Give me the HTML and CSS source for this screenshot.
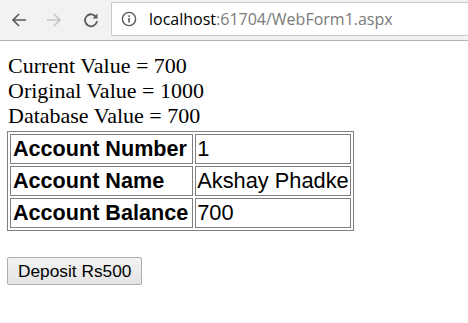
FILE: index.html
```html
<!DOCTYPE html>
<html lang="en">
<head>
  <meta charset="UTF-8" />
  <title>WebForm1</title>
  <link rel="stylesheet" href="styles.css">
</head>
<body>
  <div class="toolbar">
    <span class="nav-btn back">
      <svg width="18" height="18" viewBox="0 0 18 18"><path d="M16 9H3M9 3L3 9l6 6" fill="none" stroke="#5a5a5a" stroke-width="1.6"/></svg>
    </span>
    <span class="nav-btn forward">
      <svg width="18" height="18" viewBox="0 0 18 18"><path d="M2 9h13M9 3l6 6-6 6" fill="none" stroke="#c4c4c4" stroke-width="1.6"/></svg>
    </span>
    <span class="nav-btn reload">
      <svg width="18" height="18" viewBox="0 0 18 18"><path d="M14.2 6.2A6 6 0 1 0 15 10" fill="none" stroke="#5a5a5a" stroke-width="1.8"/><path d="M15.5 2.5v5h-5z" fill="#5a5a5a"/></svg>
    </span>
    <div class="address">
      <svg class="info" width="16" height="16" viewBox="0 0 16 16"><circle cx="8" cy="8" r="6.6" fill="none" stroke="#5a5a5a" stroke-width="1.4"/><rect x="7.2" y="7" width="1.6" height="4.5" fill="#5a5a5a"/><rect x="7.2" y="4.3" width="1.6" height="1.6" fill="#5a5a5a"/></svg>
      <span class="host">localhost</span><span class="path">:61704/WebForm1.aspx</span>
    </div>
  </div>

  <div class="page">
    <div>Current Value = 700</div>
    <div>Original Value = 1000</div>
    <div>Database Value = 700</div>

    <table class="account">
      <tr>
        <th>Account Number</th>
        <td>1</td>
      </tr>
      <tr>
        <th>Account Name</th>
        <td>Akshay Phadke</td>
      </tr>
      <tr>
        <th>Account Balance</th>
        <td>700</td>
      </tr>
    </table>

    <button class="deposit" type="button">Deposit Rs500</button>
  </div>
</body>
</html>
```

FILE: styles.css
```css
body {
  margin: 0;
  background: #ffffff;
}

.toolbar {
  height: 40px;
  background: #f2f2f2;
  border-bottom: 1px solid #b4b4b4;
  display: flex;
  align-items: center;
  padding-left: 10px;
}

.nav-btn {
  width: 18px;
  height: 18px;
  display: flex;
}

.back {
  margin-right: 17px;
}

.forward {
  margin-right: 19px;
}

.reload {
  margin-right: 11px;
}

.address {
  flex: 1;
  height: 32px;
  margin-top: -2px;
  background: #ffffff;
  border: 1px solid #c8c8c8;
  border-right: none;
  border-radius: 2px 0 0 2px;
  display: flex;
  align-items: center;
  padding-left: 9px;
  font-family: 'Open Sans', sans-serif;
  font-size: 16px;
}

.info {
  margin-right: 12px;
}

.host {
  color: #000000;
}

.path {
  color: #7a7a7a;
}

.page {
  padding: 12px 8px;
  font-family: 'Liberation Serif', serif;
  font-size: 22px;
  line-height: 25px;
  color: #000000;
}

.account {
  border: 1px solid #808080;
  border-spacing: 2px;
  margin: 3px 0 26px -1px;
  font-family: 'Liberation Sans', sans-serif;
  font-size: 21.6px;
  line-height: 26px;
}

.account th,
.account td {
  border: 1px solid #808080;
  padding: 1px 4px 1px 2px;
  text-align: left;
}

.account td {
  font-weight: normal;
  font-size: 21.8px;
  padding: 1px 1px;
}

.deposit {
  display: block;
  margin-left: -1px;
  font-family: 'Liberation Sans', sans-serif;
  font-size: 17.3px;
  height: 28px;
  padding: 0 10px;
  background: linear-gradient(#f2f2f2, #e4e4e4);
  border: 1px solid #acacac;
  border-radius: 2px;
  color: #000000;
}
```
